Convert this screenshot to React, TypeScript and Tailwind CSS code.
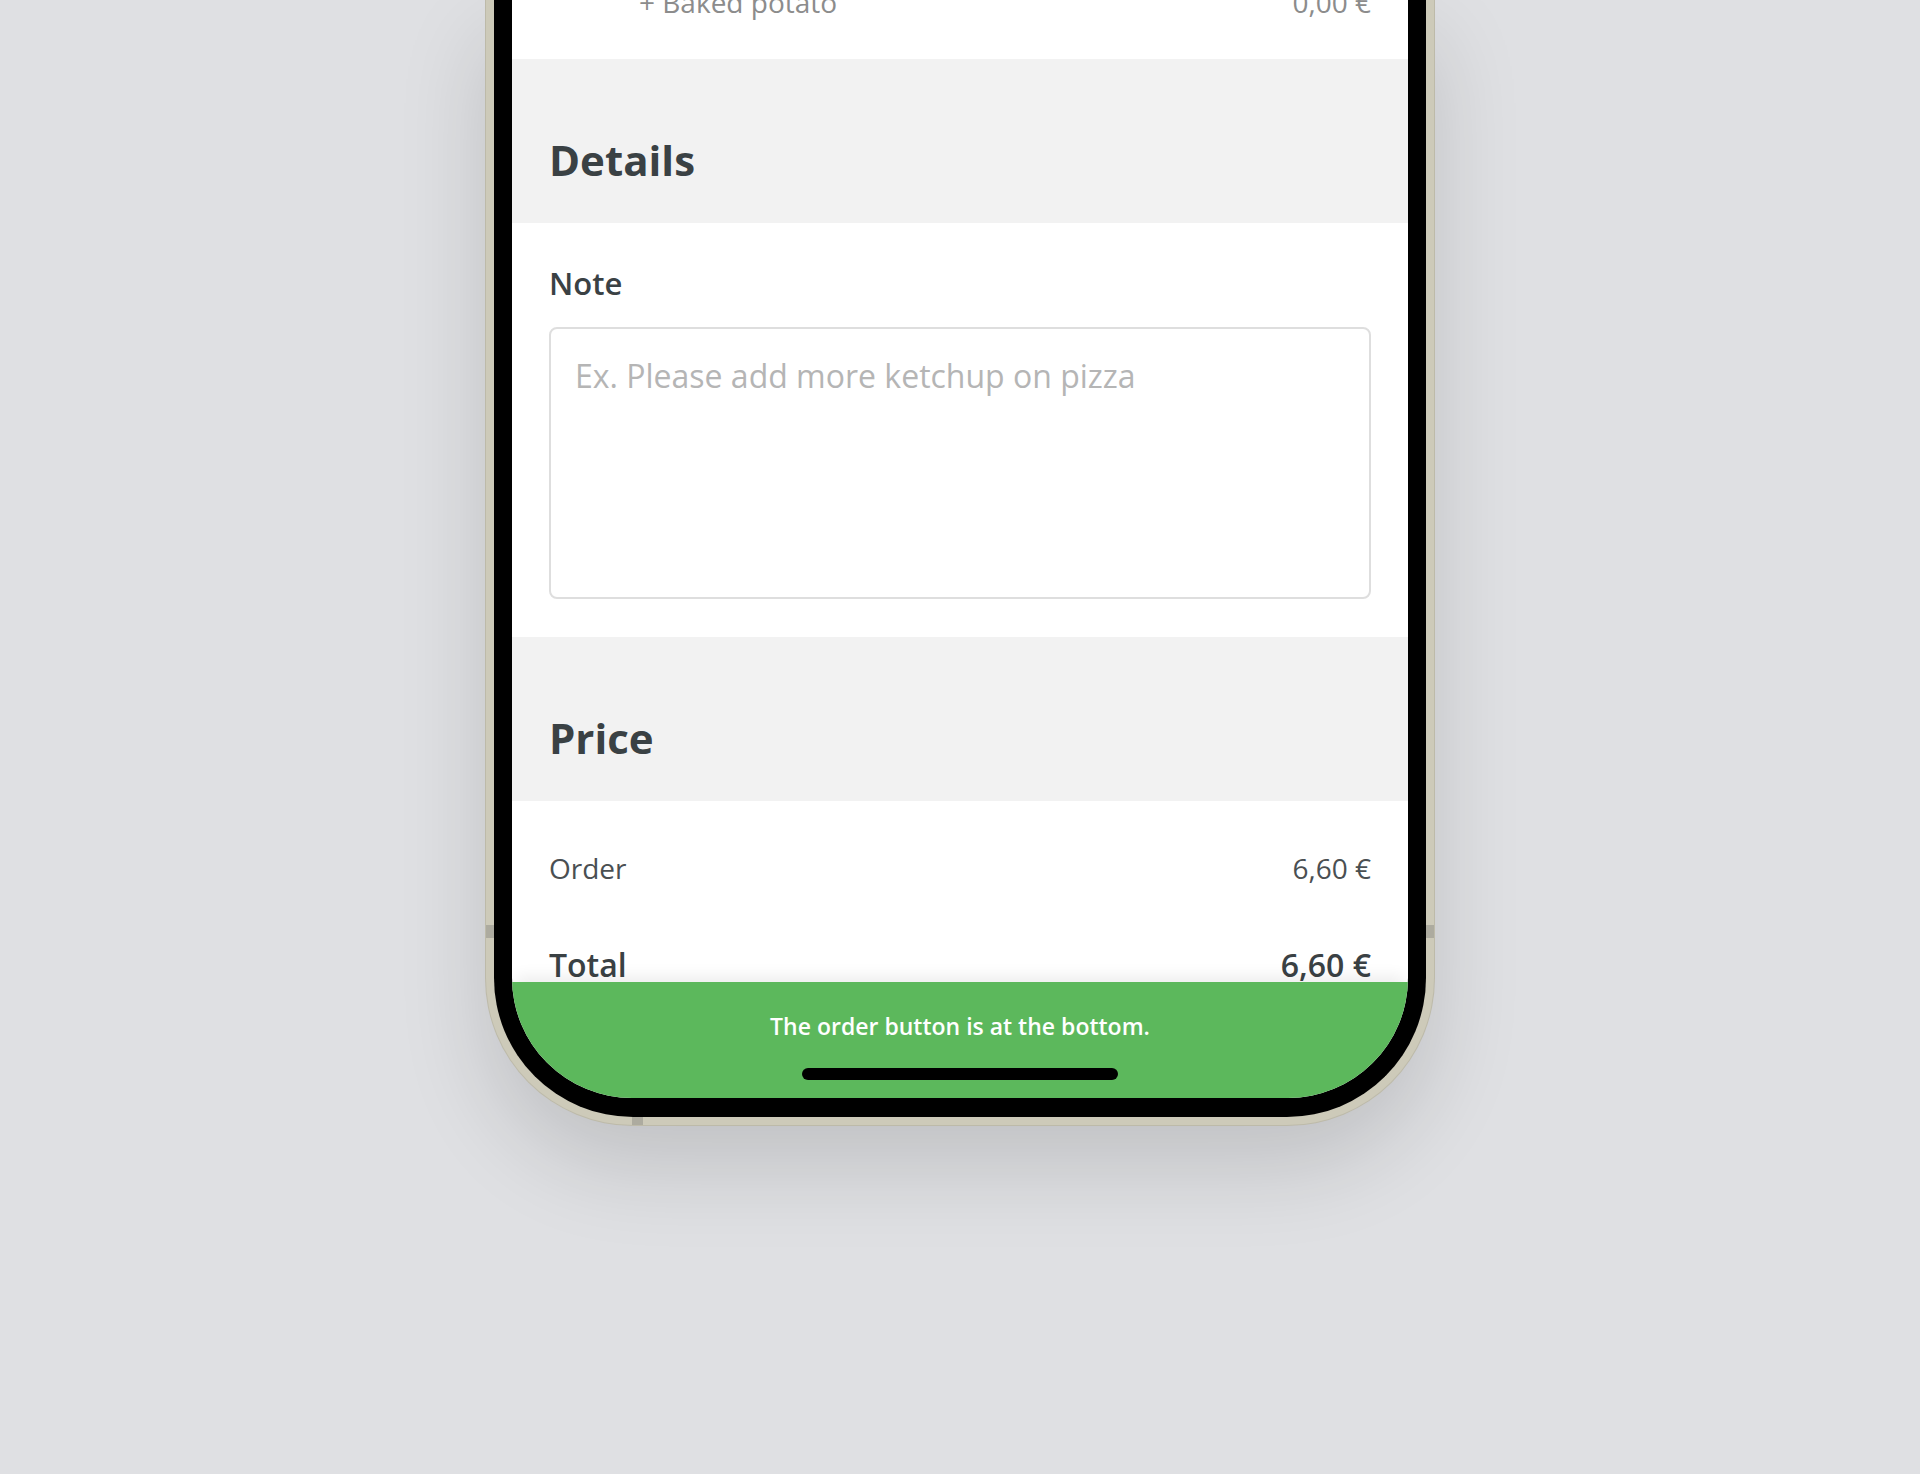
import React from 'react'

// Order form bottom part — shown inside a phone mockup cut off at the top

function SectionHeader({ title }: { title: string }) {
  return (
    <div className="h-[164px] shrink-0 bg-[#f2f2f2] px-[37px] pt-[80px]">
      <h2 className="text-[42px] leading-[42px] font-bold text-[#3a4144]">{title}</h2>
    </div>
  )
}

export default function App() {
  return (
    <div className="min-h-[1474px] w-full bg-[#dfe0e3] flex justify-center font-['Open_Sans',sans-serif]">
      {/* Phone frame */}
      <div className="relative w-[948px] h-[1125px] border-x-8 border-b-8 border-[#cdcab9] rounded-b-[147px] bg-black px-[18px] pb-[19px] shadow-[0_0_0_1px_#bdbaa9,0_40px_90px_rgba(0,0,0,0.14)]">
        {/* side buttons / antenna bands */}
        <div className="absolute -left-2 top-[925px] w-2 h-[13px] bg-[#adab9f]" />
        <div className="absolute -right-2 top-[925px] w-2 h-[13px] bg-[#adab9f]" />
        <div className="absolute left-[138px] -bottom-2 w-[11px] h-2 bg-[#adab9f]" />

        {/* Screen */}
        <div className="h-full w-full bg-white rounded-b-[120px] overflow-hidden flex flex-col">
          <div className="flex-1 min-h-0 overflow-hidden flex flex-col">
            {/* Last option row (scrolled off) */}
            <div className="h-[59px] shrink-0 flex flex-col px-[37px]">
              <div className="-mt-[19px] flex justify-between text-[28px] leading-[42px] text-[#8c8c8c]">
                <span className="pl-[90px]">+ Baked potato</span>
                <span>0,00 €</span>
              </div>
            </div>

            <SectionHeader title="Details" />

            {/* Note */}
            <div className="shrink-0 px-[37px] pt-[40px] pb-[38px]">
              <label className="block text-[31px] leading-[40px] font-semibold text-[#3a4144]">Note</label>
              <textarea
                placeholder="Ex. Please add more ketchup on pizza"
                className="mt-[24px] block w-full h-[272px] resize-none rounded-[8px] border-2 border-[#dedede] bg-white px-6 pt-[23px] pb-6 text-[32px] leading-normal text-[#3a4144] placeholder:text-[#b5b5b5] focus:outline-none"
              />
            </div>

            <SectionHeader title="Price" />

            {/* Price rows */}
            <div className="shrink-0 px-[37px] pt-[46px]">
              <div className="flex justify-between text-[28px] leading-[42px] text-[#4a4f52]">
                <span>Order</span>
                <span>6,60 €</span>
              </div>
              <div className="mt-[52px] flex justify-between text-[32px] leading-[48px] font-semibold text-[#3a4144]">
                <span>Total</span>
                <span>6,60 €</span>
              </div>
            </div>
          </div>

          {/* Bottom bar */}
          <div className="h-[116px] shrink-0 bg-[#5cb85c] flex flex-col items-center pt-[28px] shadow-[0_-10px_14px_-4px_rgba(0,0,0,0.07)]">
            <p className="text-[23px] leading-[32px] font-semibold text-white">The order button is at the bottom.</p>
            <div className="mt-[26px] w-[316px] h-[12px] rounded-full bg-black" />
          </div>
        </div>
      </div>
    </div>
  )
}
